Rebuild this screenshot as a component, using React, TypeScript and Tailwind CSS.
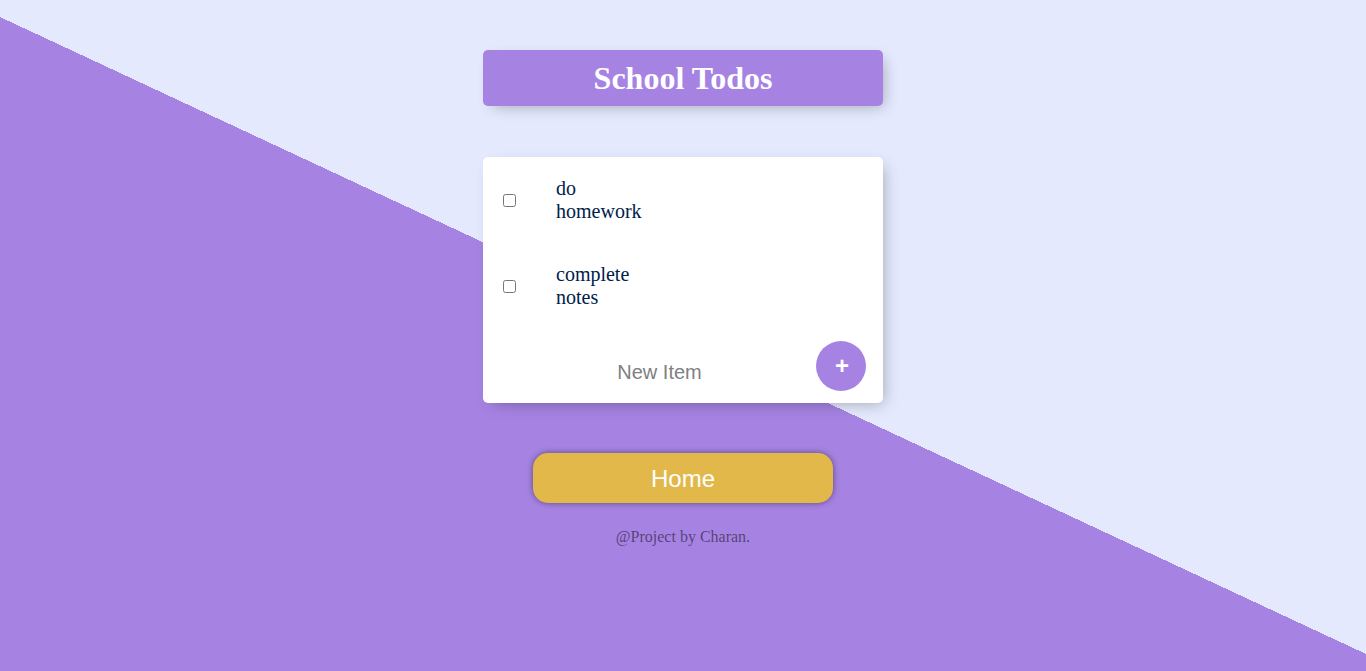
import { useState } from "react";

export default function App() {
  const [items] = useState(["do homework", "complete notes"]);

  return (
    <div className="h-screen overflow-hidden bg-[#e4e9fd] bg-[linear-gradient(25deg,#a683e3_50%,#e4e9fd_50%)] font-['Liberation_Serif',serif]">
      <div className="pt-[50px]">
        <div className="mx-auto max-w-[400px] rounded-[5px] bg-[#a683e3] text-center shadow-[5px_5px_15px_-5px_rgba(0,0,0,0.3)]">
          <h1 className="p-[10px] text-[32px] font-bold leading-[36px] text-white">
            School Todos
          </h1>
        </div>

        <div className="mx-auto mt-[51px] max-w-[400px] rounded-[5px] bg-white shadow-[5px_5px_15px_-5px_rgba(0,0,0,0.3)]">
          {items.map((item) => (
            <div key={item} className="flex min-h-[70px] items-center">
              <input type="checkbox" className="m-5 h-[13px] w-[13px]" />
              <p className="w-min p-5 text-[20px] leading-[23px] text-[#00204a]">
                {item}
              </p>
            </div>
          ))}
          <form
            className="ml-5 flex h-[74px] items-center text-center"
            onSubmit={(e) => e.preventDefault()}
          >
            <input
              type="text"
              placeholder="New Item"
              autoComplete="off"
              className="h-[60px] w-[313px] bg-transparent pt-3 text-center font-['Liberation_Sans',sans-serif] text-[20px] outline-none placeholder:text-[grey]"
            />
            <button
              type="submit"
              className="flex h-[50px] w-[50px] items-center justify-center rounded-full bg-[#a683e3] pl-[2px] font-['Liberation_Sans',sans-serif] text-[24px] font-bold leading-none text-white"
            >
              +
            </button>
          </form>
        </div>

        <button className="mx-auto mt-[50px] block h-[50px] w-[300px] rounded-[15px] bg-[#e2b84b] pt-[2px] font-['Liberation_Sans',sans-serif] text-[24px] text-white shadow-[0_0_6px_rgba(0,0,0,0.45)]">
          Home
        </button>

        <footer className="mt-[25px] text-center text-[16px] leading-[18px] text-black/50">
          @Project by Charan.
        </footer>
      </div>
    </div>
  );
}
